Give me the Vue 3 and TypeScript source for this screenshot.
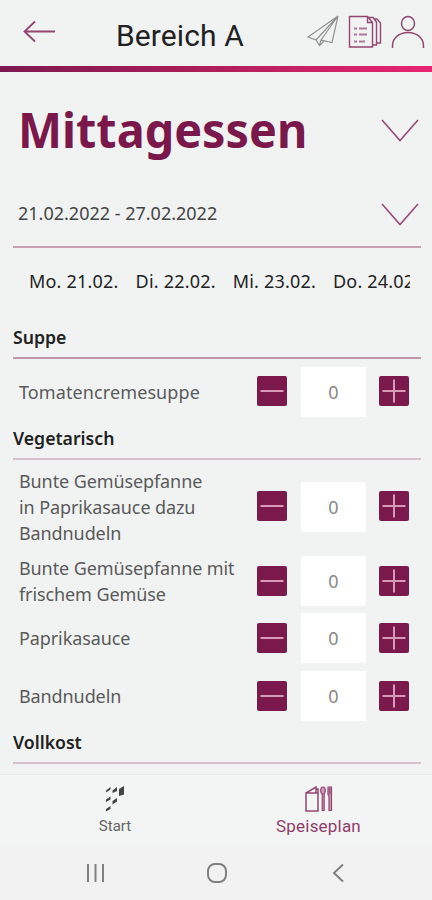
<script setup lang="ts">
import { ref } from 'vue'

interface Dish { lines: string[]; count: number; size: string; fit: string }
interface Section { title: string; key: string; dishes: Dish[] }

const days = ['Mo. 21.02.', 'Di. 22.02.', 'Mi. 23.02.', 'Do. 24.02.']

const sections = ref<Section[]>([
  { title: 'Suppe', key: 'soup', dishes: [{ lines: ['Tomatencremesuppe'], count: 0, size: 'roomy', fit: 'wide' }] },
  {
    title: 'Vegetarisch',
    key: 'veggie',
    dishes: [
      { lines: ['Bunte Gemüsepfanne', 'in Paprikasauce dazu', 'Bandnudeln'], count: 0, size: 'tall', fit: 'snug' },
      { lines: ['Bunte Gemüsepfanne mit', 'frischem Gemüse'], count: 0, size: 'medium', fit: 'snug' },
      { lines: ['Paprikasauce'], count: 0, size: 'normal', fit: 'snug' },
      { lines: ['Bandnudeln'], count: 0, size: 'normal', fit: 'snug' },
    ],
  },
  { title: 'Vollkost', key: 'full', dishes: [] },
])

function change(dish: Dish, by: number): void {
  dish.count = Math.max(0, dish.count + by)
}
</script>

<template>
  <div class="screen">
    <header class="topbar">
      <svg class="back" width="34" height="24" viewBox="0 0 34 24"><path d="M32 11.500H1.500M12 1.500 1.500 11.500l10.500 10" /></svg>
      <div class="heading">Bereich A</div>
      <div class="actions">
        <svg class="plane" width="32" height="32" viewBox="0 0 32 32">
          <path d="M31 1 1 22l8 3L31 1 14 25l11 2.500L31 1M9 25l3.500 5.500L17 26M12.500 30.500 14 25" />
        </svg>
        <svg class="sheets" width="34" height="34" viewBox="0 0 34 34">
          <path d="M1.500 1.500h18l5 6v24.500h-23zM19.500 1.500v6h5M20 2.500h5l3.500 4.500V30H25M25.500 4h3.500l3.500 4v20H29" />
          <path class="marks" d="M6 13.500h3M6 19.500h3M6 26.500h3M11 13.500h8M11 19.500h8M11 26.500h6" />
        </svg>
        <svg class="person" width="34" height="34" viewBox="0 0 34 34">
          <ellipse cx="17" cy="8.500" rx="6.500" ry="7" /><path d="M1.500 33v-2c0-18 31-18 31 0v2" />
        </svg>
      </div>
    </header>
    <div class="accent"></div>

    <main class="content">
      <div class="meal">
        <h1>Mittagessen</h1>
        <svg class="chevron" width="38" height="24" viewBox="0 0 38 24"><path d="m1 1 18 20.500L37 1" /></svg>
      </div>
      <div class="week">
        <span>21.02.2022 - 27.02.2022</span>
        <svg class="chevron" width="38" height="24" viewBox="0 0 38 24"><path d="m1 1 18 20.500L37 1" /></svg>
      </div>
      <div class="days">
        <span v-for="day in days" :key="day">{{ day }}</span>
      </div>

      <section v-for="section in sections" :key="section.key" :class="section.key">
        <h2><span>{{ section.title }}</span></h2>
        <div v-for="(dish, i) in section.dishes" :key="i" class="dish" :class="dish.size">
          <div class="name" :class="dish.fit"><div v-for="line in dish.lines" :key="line">{{ line }}</div></div>
          <button class="step" @click="change(dish, -1)">
            <svg width="30" height="30" viewBox="0 0 30 30"><path d="M3.500 15h23" /></svg>
          </button>
          <div class="count">{{ dish.count }}</div>
          <button class="step" @click="change(dish, 1)">
            <svg width="30" height="30" viewBox="0 0 30 30"><path d="M3.500 15h23M15 3.500v23" /></svg>
          </button>
        </div>
      </section>
    </main>

    <nav class="tabs">
      <div class="tab start">
        <svg width="20" height="28" viewBox="0 0 20 28">
          <path d="m1 5.500 4.500-3.500v2.500L1 7.500zM7.500 5.500 12 2v4l-4.500 2zM14 4l5-3v8.500L14 11zM1 14.500l4.500-3v3L1 17zM7.500 16l4.500-3v3.500l-4.500 3zM1 24l4.500-3v3L1 26.500z" />
        </svg>
        <span>Start</span>
      </div>
      <div class="tab plan">
        <svg width="28" height="28" viewBox="0 0 28 28">
          <path d="M1 8h12v18H1zM1 8l10-6v6M11 4h2v4" />
          <ellipse class="shade" cx="18" cy="5.500" rx="2.300" ry="3.500" />
          <path class="shade" d="M17.200 9v16.500h2V9M23 1.500v8l1 2v14h2.500v-24M24.800 1.500v8" />
        </svg>
        <span>Speiseplan</span>
      </div>
    </nav>
    <footer class="system">
      <svg width="20" height="20" viewBox="0 0 20 20"><path d="M2 1v18M9.500 1v18M17 1v18" /></svg>
      <svg width="20" height="20" viewBox="0 0 20 20"><rect x="1" y="1" width="18" height="18" rx="7" /></svg>
      <svg width="20" height="20" viewBox="0 0 20 20"><path d="m15 1.500-9 8.500 9 8.500" /></svg>
    </footer>
  </div>
</template>

<style>
body { background: #f1f3f3; }
</style>

<style scoped>
.screen {
  width: 432px;
  height: 900px;
  display: flex;
  flex-direction: column;
  overflow: hidden;
  background: #f1f3f3;
  color: #222;
  font-family: "Noto Sans", "Open Sans", sans-serif;
}
svg { display: block; flex: none; fill: none; stroke: #934672; stroke-width: 1.5; }
.topbar { height: 66px; display: flex; flex: none; padding: 0 7px 0 23px; box-sizing: border-box; }
.back { margin-top: 20px; stroke-width: 1.8; }
.heading {
  margin-left: 59px;
  width: 150px;
  padding-top: 16px;
  font: 400 30px/40px Roboto, sans-serif;
  letter-spacing: .1px;
  white-space: nowrap;
}
.actions { display: flex; margin-left: auto; padding-top: 15px; gap: 9px; }
.plane { stroke: #929292; stroke-width: 1.2; }
.sheets { stroke-width: 1.4; }
.marks { stroke-width: 2; opacity: .7; }
.accent { height: 6px; margin-bottom: 1px; flex: none; background: linear-gradient(90deg, #7d1850, #a61d58 40%, #e82572); }
.content { width: 408px; height: 701px; flex: none; padding-left: 13px; overflow: hidden; }
.meal { height: 116px; display: flex; justify-content: space-between; padding: 0 2px 0 5px; }
h1 {
  margin: 0;
  padding-top: 22px;
  font-size: 49px;
  line-height: 68px;
  font-weight: 700;
  color: #7a174b;
  transform: scaleX(.954);
  transform-origin: left;
}
.meal .chevron { margin-top: 46px; }
.week {
  height: 59px;
  box-sizing: border-box;
  border-bottom: 2px solid #c79fb3;
  display: flex;
  justify-content: space-between;
  padding: 0 2px 0 5px;
  color: #444;
  font-size: 18px;
  line-height: 26px;
}
.week span { margin-top: 11px; }
.week .chevron { margin-top: 14px; }
.days {
  display: flex;
  gap: 17px;
  width: 381px;
  height: 69px;
  box-sizing: border-box;
  margin-left: 16px;
  padding-top: 20px;
  overflow: hidden;
  white-space: nowrap;
  font-size: 18px;
  line-height: 26px;
  font-weight: 450;
  letter-spacing: .2px;
}
h2 {
  height: 36px;
  box-sizing: border-box;
  margin: 0;
  border-bottom: 2px solid #d8c0cc;
  display: flex;
  align-items: flex-end;
  padding-bottom: 7px;
  font-size: 18px;
  line-height: 26px;
  font-weight: 600;
}
h2 span { transform: scaleX(.98); transform-origin: left; }
.soup h2 { height: 42px; border-color: #be98ab; }
.full h2 { height: 39px; }
.dish { display: flex; align-items: center; }
.roomy { height: 65px; }
.tall { height: 93px; }
.medium { height: 56px; }
.normal { height: 58px; }
.name {
  width: 238px;
  padding-left: 6px;
  white-space: nowrap;
  color: #5a5a5a;
  font-size: 18px;
  line-height: 26px;
}
.wide { letter-spacing: .1px; }
.snug { letter-spacing: -.1px; }
.step {
  width: 30px;
  height: 30px;
  margin-bottom: 1px;
  padding: 0;
  border: 0;
  border-radius: 2px;
  background: #7b194d;
}
.roomy .step { margin-bottom: 2px; }
.step svg { stroke: #d79bb9; stroke-width: 2; }
.count {
  width: 65px;
  height: 50px;
  margin: 0 13px 0 14px;
  background: #fff;
  text-align: center;
  color: #888;
  font-size: 18px;
  line-height: 50px;
}
.tabs {
  height: 73px;
  flex: none;
  box-sizing: border-box;
  border-top: 1px solid #e9ebeb;
  display: flex;
  background: #f3f5f5;
  font-family: Roboto, sans-serif;
  color: #666;
}
.tab { display: flex; flex-direction: column; align-items: center; padding-top: 10px; gap: 3px; }
.start { width: 230px; font-size: 15px; line-height: 20px; }
.start svg { fill: #444; stroke: none; }
.plan { width: 177px; font-size: 17px; line-height: 20px; font-weight: 400; letter-spacing: .2px; color: #903b69; }
.shade { fill: #c99cb4; stroke-width: 1.2; }
.system {
  height: 53px;
  flex: none;
  display: flex;
  justify-content: space-between;
  align-items: center;
  padding: 0 84px 2px 86px;
  box-sizing: border-box;
  background: #f2f2f2;
}
.system svg { stroke: #808080; stroke-width: 2; }
</style>
